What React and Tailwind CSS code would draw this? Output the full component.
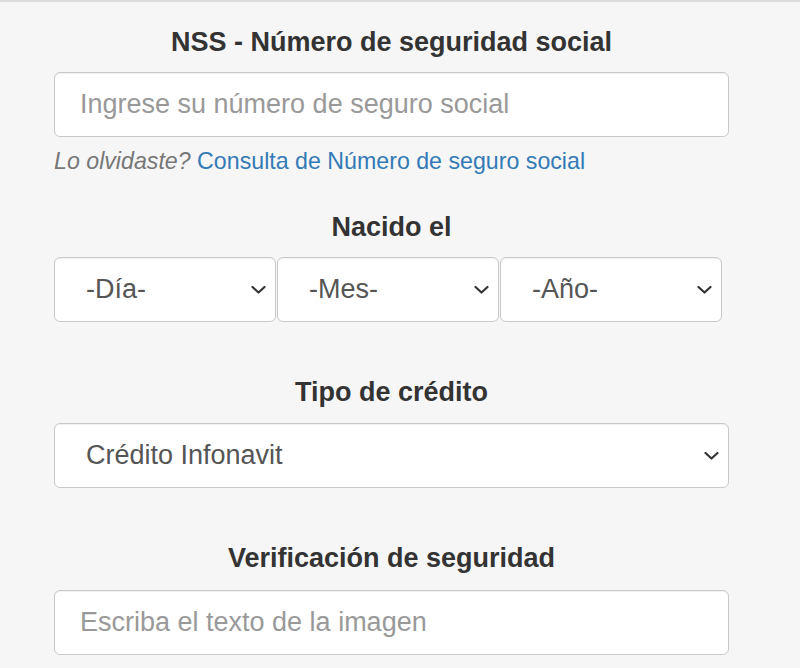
import {useState} from "react";

function Chevron() {
    return (
        <svg width="15" height="9" viewBox="0 0 15 9" fill="none" className="shrink-0">
            <path d="M1.5 1.5 L7.5 7 L13.5 1.5" stroke="#333" strokeWidth="2.2" strokeLinecap="round" strokeLinejoin="round"/>
        </svg>
    )
}

function Select({value, options, onChange, className}) {
    return (
        <div className={"relative h-[65px] rounded-[6px] border border-[#c9c9c9] bg-white shadow-[inset_0_1px_1px_rgba(0,0,0,0.06)] " + className}>
            <select
                value={value}
                onChange={({target}) => onChange(target.value)}
                className="h-full w-full appearance-none bg-transparent pl-[31px] pr-10 text-[27px] text-[#555] outline-none"
            >
                {options.map((o) => <option key={o} value={o}>{o}</option>)}
            </select>
            <div className="pointer-events-none absolute right-[9px] top-1/2 -translate-y-1/2">
                <Chevron/>
            </div>
        </div>
    )
}

export default function App() {
    const [nss, setNss] = useState("");
    const [dia, setDia] = useState("-Día-");
    const [mes, setMes] = useState("-Mes-");
    const [anio, setAnio] = useState("-Año-");
    const [credito, setCredito] = useState("Crédito Infonavit");
    const [captcha, setCaptcha] = useState("");

    return (
        <div className="min-h-[668px] border-t-2 border-[#dcdcdc] bg-[#f6f6f6] font-['Liberation_Sans',Arial,sans-serif] text-[#333]">
            <div className="ml-[54px] w-[675px] pt-[25px]">
                <h2 className="text-center text-[27px] font-bold leading-[30px]">NSS - Número de seguridad social</h2>
                <input
                    value={nss}
                    onChange={({target}) => setNss(target.value)}
                    placeholder="Ingrese su número de seguro social"
                    className="mt-[15px] block h-[65px] w-full rounded-[6px] border border-[#c9c9c9] bg-white px-[25px] text-[27px] text-[#555] shadow-[inset_0_1px_1px_rgba(0,0,0,0.06)] outline-none placeholder:text-[#999]"
                />
                <p className="mt-[12px] text-[23.2px] leading-[24px]">
                    <em className="text-[#777]">Lo olvidaste?</em>{" "}
                    <a href="#" className="text-[#337ab7]">Consulta de Número de seguro social</a>
                </p>

                <h2 className="mt-[39px] text-center text-[27px] font-bold leading-[30px]">Nacido el</h2>
                <div className="mt-[15px] flex w-[668px] gap-[1px]">
                    <Select value={dia} onChange={setDia} options={["-Día-", "1", "2", "3"]} className="flex-1"/>
                    <Select value={mes} onChange={setMes} options={["-Mes-", "Enero", "Febrero"]} className="flex-1"/>
                    <Select value={anio} onChange={setAnio} options={["-Año-", "2000", "2001"]} className="flex-1"/>
                </div>

                <h2 className="mt-[55px] text-center text-[27px] font-bold leading-[30px]">Tipo de crédito</h2>
                <Select value={credito} onChange={setCredito} options={["Crédito Infonavit", "Cofinavit", "Apoyo Infonavit"]} className="mt-[16px] w-full"/>

                <h2 className="mt-[55px] text-center text-[27px] font-bold leading-[30px]">Verificación de seguridad</h2>
                <input
                    value={captcha}
                    onChange={({target}) => setCaptcha(target.value)}
                    placeholder="Escriba el texto de la imagen"
                    className="mt-[17px] block h-[65px] w-full rounded-[6px] border border-[#c9c9c9] bg-white px-[25px] text-[27px] text-[#555] shadow-[inset_0_1px_1px_rgba(0,0,0,0.06)] outline-none placeholder:text-[#999]"
                />
            </div>
        </div>
    )
}
